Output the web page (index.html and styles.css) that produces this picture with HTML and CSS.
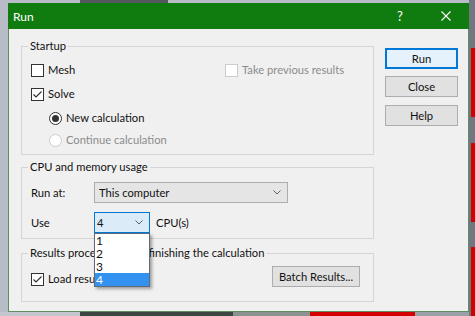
FILE: index.html
```html
<!DOCTYPE html>
<html lang="en">
<head>
  <meta charset="UTF-8">
  <title>Run</title>
  <link rel="stylesheet" href="styles.css">
</head>
<body>

<div class="desktop">
  <div class="bg-top-dark"></div>
  <div class="bg-right">
    <div class="red r1"></div>
    <div class="red r2"></div>
    <div class="red r3"></div>
  </div>
  <div class="bg-bottom">
    <div class="seg s1"></div>
    <div class="seg s2"></div>
    <div class="seg s3"></div>
    <div class="seg s4"></div>
    <div class="seg s5"></div>
  </div>
</div>

<div class="window">
  <div class="titlebar">
    <span class="title">Run</span>
    <span class="caption-btn">?</span>
    <span class="caption-btn">
      <svg width="10" height="10" viewBox="0 0 10 10"><path d="M0.5 0.5 L9.5 9.5 M9.5 0.5 L0.5 9.5" stroke="#fff" stroke-width="1.1"/></svg>
    </span>
  </div>

  <div class="client">
    <div class="groups">

      <fieldset class="group startup">
        <legend>Startup</legend>
        <div class="row">
          <span class="check mesh"><span class="box"></span>Mesh</span>
          <span class="check disabled"><span class="box"></span>Take previous results</span>
        </div>
        <div class="row">
          <span class="check">
            <span class="box">
              <svg width="11" height="11" viewBox="0 0 11 11"><path d="M1.5 5.5 L4 8 L9.5 2.5" fill="none" stroke="#333" stroke-width="1.2"/></svg>
            </span>Solve
          </span>
        </div>
        <div class="row indent">
          <span class="radio on"><span class="dot"></span>New calculation</span>
        </div>
        <div class="row indent continue">
          <span class="radio disabled"><span class="dot"></span>Continue calculation</span>
        </div>
      </fieldset>

      <fieldset class="group cpu">
        <legend>CPU and memory usage</legend>
        <div class="field-row">
          <span class="field-label">Run at:</span>
          <div class="combo wide">
            <span>This computer</span>
            <svg width="8" height="5" viewBox="0 0 8 5"><path d="M0.5 0.5 L4 4 L7.5 0.5" fill="none" stroke="#606060"/></svg>
          </div>
        </div>
        <div class="field-row use-row">
          <span class="field-label">Use</span>
          <div class="combo-wrap">
            <div class="combo open">
              <span>4</span>
              <svg width="8" height="5" viewBox="0 0 8 5"><path d="M0.5 0.5 L4 4 L7.5 0.5" fill="none" stroke="#606060"/></svg>
            </div>
            <ul class="dropdown">
              <li>1</li>
              <li>2</li>
              <li>3</li>
              <li class="selected">4</li>
            </ul>
          </div>
          <span class="unit">CPU(s)</span>
        </div>
      </fieldset>

      <fieldset class="group results">
        <legend>Results processing after finishing the calculation</legend>
        <div class="results-row">
          <span class="check load">
            <span class="box">
              <svg width="11" height="11" viewBox="0 0 11 11"><path d="M1.5 5.5 L4 8 L9.5 2.5" fill="none" stroke="#333" stroke-width="1.2"/></svg>
            </span>Load results
          </span>
          <button class="btn batch">Batch Results...</button>
        </div>
      </fieldset>

    </div>

    <div class="buttons">
      <button class="btn default">Run</button>
      <button class="btn">Close</button>
      <button class="btn help">Help</button>
    </div>
  </div>
</div>

</body>
</html>
```

FILE: styles.css
```css
html, body {
  margin: 0;
  padding: 0;
}

body {
  position: relative;
  width: 475px;
  height: 316px;
  box-sizing: border-box;
  padding: 3px 0 0 8px;
  overflow: hidden;
  background-color: #b8bcc6;
  font-family: Lato, "Liberation Sans", sans-serif;
  font-size: 11.2px;
  color: #111;
}

/* desktop behind the dialog */
.bg-top-dark {
  position: absolute;
  left: 80px;
  top: 0;
  width: 88px;
  height: 3px;
  background: #55585c;
}

.bg-right {
  position: absolute;
  left: 469px;
  top: 0;
  width: 6px;
  height: 316px;
  background: #707682;
}

.red {
  position: absolute;
  left: 2px;
  width: 4px;
  background: #d40000;
}
.r1 { top: 48px; height: 69px; }
.r2 { top: 143px; height: 79px; }
.r3 { top: 247px; height: 69px; }

.bg-bottom {
  position: absolute;
  left: 0;
  top: 312px;
  width: 469px;
  height: 4px;
  display: flex;
}
.seg { height: 4px; }
.s1 { width: 80px; background: #c3c6cc; }
.s2 { width: 153px; background: #3d4640; }
.s3 { width: 77px; background: #8c9292; }
.s4 { width: 105px; background: #d40000; }
.s5 { flex: 1; background: #9aa0a6; }

/* dialog */
.window {
  position: relative;
  width: 461px;
  height: 309px;
  box-sizing: border-box;
  background: #f0f0f0;
  border: 1px solid #5e8f5e;
  border-top: 0;
  display: flex;
  flex-direction: column;
}

.titlebar {
  height: 26px;
  margin: 0 -1px;
  background: #107c10;
  color: #fff;
  display: flex;
  align-items: center;
  font-size: 12px;
}

.title {
  flex: 1;
  padding-left: 5px;
}

.caption-btn {
  width: 46px;
  height: 26px;
  display: flex;
  align-items: center;
  justify-content: center;
  font-size: 13px;
}

.client {
  flex: 1;
  display: flex;
  gap: 11px;
  padding: 10px 0 0 12px;
}

.groups {
  width: 353px;
  display: flex;
  flex-direction: column;
}

.group {
  margin: 0;
  min-width: 0;
  border: 1px solid #d5d5d5;
  padding: 7px 13px 4px 9px;
}

.group legend {
  padding: 0 2px;
  margin-left: -3px;
  line-height: 14px;
}

.cpu { margin-top: 5px; padding-top: 8px; padding-bottom: 5px; }
.results { margin-top: 7px; padding-top: 6px; padding-bottom: 14px; }

/* startup rows */
.row {
  display: flex;
  align-items: center;
  height: 20px;
}
.row + .row { margin-top: 4px; }
.row.continue { margin-top: 2px; }
.row.indent { padding-left: 18px; }

.check, .radio {
  display: flex;
  align-items: center;
  gap: 4px;
  line-height: 14px;
}

.check.mesh { flex: 0 0 194px; }

.box {
  width: 13px;
  height: 13px;
  box-sizing: border-box;
  border: 1px solid #333;
  background: #fff;
  display: flex;
  align-items: center;
  justify-content: center;
}

.radio .dot {
  width: 13px;
  height: 13px;
  box-sizing: border-box;
  border: 1px solid #333;
  border-radius: 50%;
  background: #fff;
  display: flex;
  align-items: center;
  justify-content: center;
}
.radio.on .dot::after {
  content: "";
  width: 7px;
  height: 7px;
  border-radius: 50%;
  background: #333;
}

.disabled { color: #8c8c8c; }
.disabled .box, .disabled .dot { border-color: #cccccc; }

/* cpu rows */
.field-row {
  display: flex;
  align-items: center;
  height: 21px;
}
.use-row { margin-top: 9px; }

.field-label { width: 63px; }

.combo {
  height: 21px;
  box-sizing: border-box;
  border: 1px solid #adadad;
  background: #e5e5e5;
  display: flex;
  align-items: center;
  justify-content: space-between;
  padding: 0 6px 0 4px;
}
.combo.wide { width: 194px; }

.combo-wrap {
  position: relative;
  width: 56px;
}
.combo.open {
  border-color: #0078d7;
  background: #dcebf8;
  padding-left: 2px;
}

.dropdown {
  position: absolute;
  left: 0;
  top: 100%;
  z-index: 2;
  width: 56px;
  margin: 0;
  padding: 0;
  list-style: none;
  box-sizing: border-box;
  border: 1px solid #5f6b78;
  background: #fff;
  box-shadow: 2px 2px 3px rgba(0, 0, 0, 0.35);
}
.dropdown li {
  height: 13px;
  line-height: 13px;
  padding-left: 1px;
  font-size: 12px;
}
.dropdown li.selected {
  background: #3391f0;
  color: #fff;
}

.unit { margin-left: 6px; }

/* results row */
.results-row {
  display: flex;
  justify-content: space-between;
  align-items: flex-end;
}
.check.load { margin-bottom: 1px; }

/* push buttons */
.btn {
  height: 21px;
  margin: 0;
  padding: 0;
  box-sizing: border-box;
  border: 1px solid #adadad;
  background: #e1e1e1;
  font: inherit;
  color: #111;
}
.btn.batch { width: 88px; }

.buttons {
  display: flex;
  flex-direction: column;
  gap: 7px;
  padding-top: 9px;
}
.buttons .btn { width: 73px; }
.btn.default {
  border: 2px solid #0078d7;
  background: #e5f1fb;
}
.btn.help { margin-top: 1px; }
```
